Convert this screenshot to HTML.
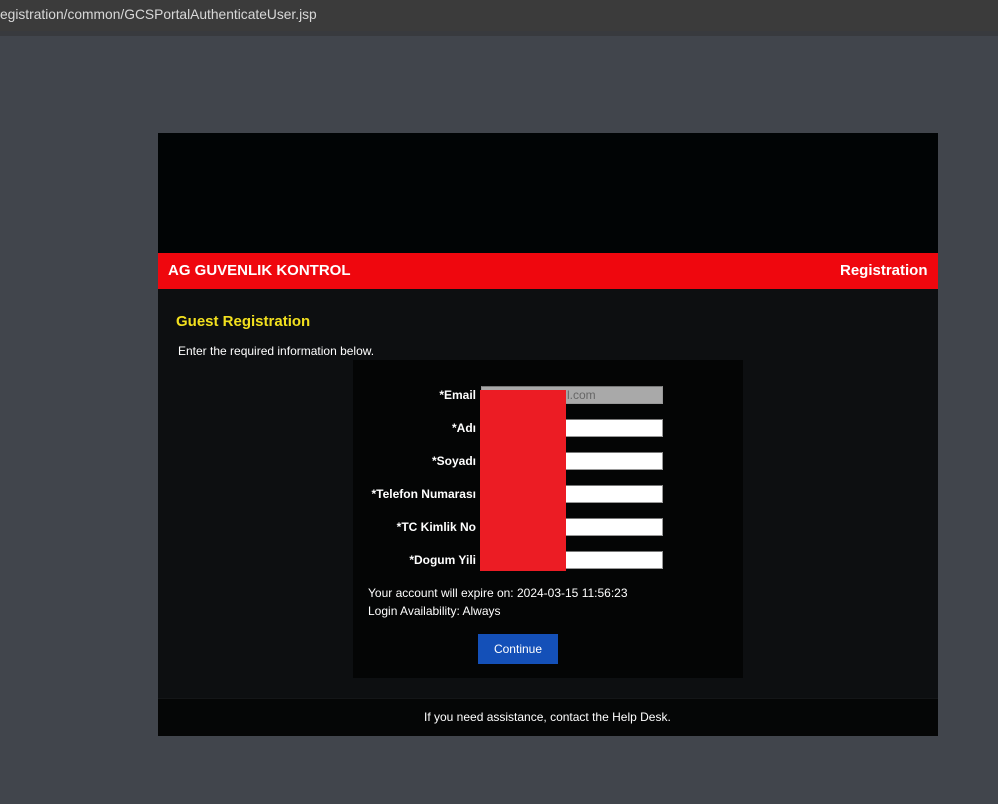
<!DOCTYPE html>
<html><head><meta charset="utf-8"><style>
*{margin:0;padding:0;box-sizing:border-box}
body{width:998px;height:804px;background:#41454c;font-family:"Liberation Sans",Arial,sans-serif;position:relative;overflow:hidden}
.bar{position:absolute;left:0;top:0;width:998px;height:31px;background:#3b3b3b;color:#d8d8d8;font-size:13.8px;line-height:30px;padding-left:0}
.bar2{position:absolute;left:0;top:31px;width:998px;height:5px;background:#383a3e}
.ab{position:absolute}
.lbl{position:absolute;color:#fff;font-weight:bold;font-size:12px;text-align:right;width:200px;left:276px}
.inp{position:absolute;left:481px;width:182px;height:18px;background:#fff;border:1px solid #999;border-top-color:#777}
.t{position:absolute;color:#fff;font-size:12px}
</style></head><body>
<div class="bar">egistration/common/GCSPortalAuthenticateUser.jsp</div>
<div class="bar2"></div>
<div class="ab" style="left:158px;top:133px;width:780px;height:603px;background:#0d0f11"></div>
<div class="ab" style="left:158px;top:133px;width:780px;height:120px;background:#010405"></div>
<div class="ab" style="left:158px;top:253px;width:780px;height:36px;background:#ef070e"></div>
<div class="t" style="left:168px;top:262px;font-size:15px;font-weight:bold">AG GUVENLIK KONTROL</div>
<div class="t" style="left:840px;top:262px;font-size:15px;font-weight:bold">Registration</div>
<div class="t" style="left:176px;top:313px;font-size:15px;font-weight:bold;color:#f2e01e">Guest Registration</div>
<div class="t" style="left:178px;top:344px">Enter the required information below.</div>
<div class="ab" style="left:353px;top:360px;width:390px;height:318px;background:#040505"></div>
<div class="lbl" style="top:388px">*Email</div>
<div class="inp" style="top:386px;background:#a9a9a9;color:#666;font-size:12px;line-height:16px;padding-left:85px">l.com</div>
<div class="lbl" style="top:421px">*Adı</div><div class="inp" style="top:419px"></div>
<div class="lbl" style="top:454px">*Soyadı</div><div class="inp" style="top:452px"></div>
<div class="lbl" style="top:487px">*Telefon Numarası</div><div class="inp" style="top:485px"></div>
<div class="lbl" style="top:520px">*TC Kimlik No</div><div class="inp" style="top:518px"></div>
<div class="lbl" style="top:553px">*Dogum Yili</div><div class="inp" style="top:551px"></div>
<div class="ab" style="left:480px;top:390px;width:86px;height:181px;background:#ec1c24"></div>
<div class="t" style="left:368px;top:586px">Your account will expire on: 2024-03-15 11:56:23</div>
<div class="t" style="left:368px;top:604px">Login Availability: Always</div>
<div class="ab" style="left:478px;top:634px;width:80px;height:30px;background:#1450b8;color:#fff;font-size:12px;text-align:center;line-height:30px">Continue</div>
<div class="ab" style="left:158px;top:698px;width:780px;height:38px;background:#050606;border-top:1px solid #141618"></div>
<div class="t" style="left:424px;top:710px">If you need assistance, contact the Help Desk.</div>
</body></html>
